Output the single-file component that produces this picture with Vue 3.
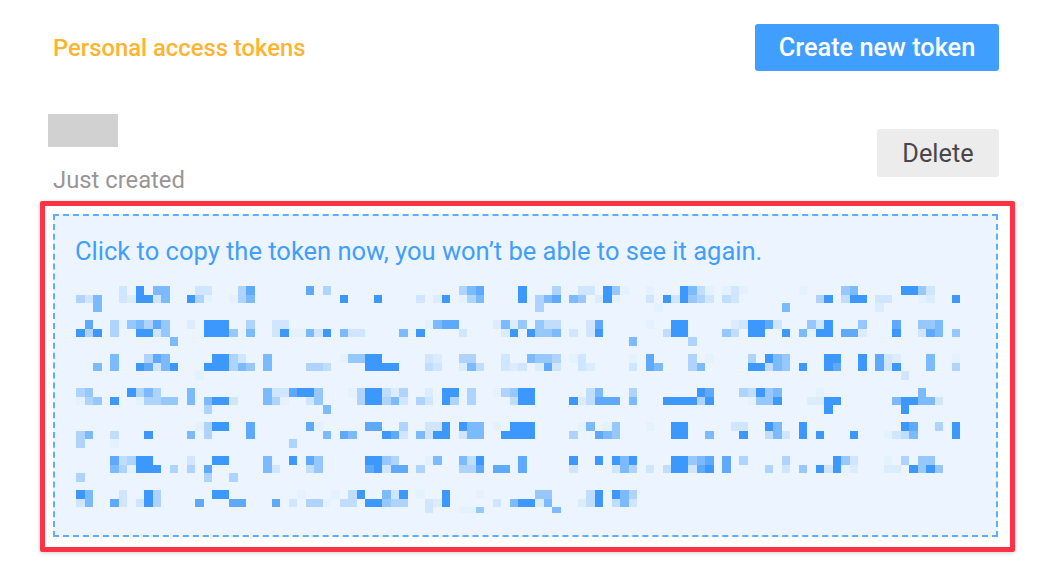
<script setup>
import { computed } from 'vue'

const CELL = 8.5

// blurred token: row index -> "column:level" pairs, level 1 (faint) to 5 (solid)
const tokenRows = {
  0: '5:2 7:5 9:4 10:4 14:2 15:2 19:3 20:4.5 27:4.5 29:3 45:3 46:4 47:4.5 52:5 56:3 59:2 60:2 62:5 63:3.5 64:1 67:1 71:5 72:4 73:2.5 74:1 76:1 77:2 78:1 85:1 90:3.5 91:4 97:5 98:5 99:3.5 100:2',
  1: '0:3 1:2 2:4 5:2 6:1.5 7:5 8:5 9:2 10:4 13:5 14:3 15:1 18:1 19:3 20:4 31:5 35:5 40:2 42:1.5 43:5 45:1 46:3 47:4 52:5 54:3 55:4 56:4.5 58:4 59:3.5 61:1.5 62:5 63:1 67:2 69:5 70:2 71:5 72:3.5 73:3 74:2 76:2.5 77:2 87:3 88:5 90:2.5 91:5 92:5 94:2 95:2 99:1 100:1.5 103:5',
  2: '2:4 54:3 68:1 83:4 94:1.5',
  4: '1:4.5 4:3 5:1 6:3.5 7:4 8:3 9:4.5 10:3.5 13:1.5 15:5 16:5 17:5 20:3 23:2 24:2 41:1 42:4 43:4.5 44:4.5 49:1.5 50:4 51:1.5 52:3.5 54:3.5 55:2.5 56:2.5 60:2 61:4.5 67:1 70:5 71:5 77:1.5 78:2 79:5 80:5 81:4.5 82:2 86:3.5 87:2 88:5 92:3.5 96:4.5 99:3.5 100:3.5 101:4',
  5: '0:5 1:3 2:5 4:3 7:5 8:5 9:2 10:3.5 15:5 16:5 17:5 18:3.5 20:4 23:2 24:5 25:1 26:1 27:4 28:2 29:5 31:4 32:2 33:2 38:4 40:5 45:2 50:1.5 51:5 53:5 54:3.5 55:3.5 56:4 58:2 60:2 61:5 69:2.5 70:5 71:5 76:3.5 77:2.5 79:5 80:5 83:5 85:4 86:1 87:5 88:5 90:4.5 91:4.5 92:1.5 96:5 99:2 100:4.5 101:4 103:3.5',
  6: '11:4 65:4 72:3',
  8: '4:4 8:3 9:4.5 10:4 16:5 17:5 18:3 19:2 22:4 31:1 32:3.5 33:3.5 34:5 35:5 41:2 42:1.5 45:3 46:3 50:2 53:4 54:3.5 55:3.5 56:3 58:1 59:2 65:1 67:4.5 72:3 74:1 79:3 81:5 82:4 83:3.5 88:5 89:5 92:5 94:4.5 95:2 96:1.5 100:4 103:1',
  9: '2:4 4:4 7:5 8:4.5 9:2 10:4 11:5 15:5 16:5 17:5 18:3 19:4 20:3.5 22:4 27:3 28:3 29:2.5 34:5 35:5 36:5 37:5 41:2.5 42:2 45:1.5 46:4 47:2.5 50:2 51:1.5 52:2 54:1.5 55:4.5 56:2 59:2 60:1.5 65:2 67:4.5 68:4 72:3 73:4 79:5 80:5 81:2.5 82:4 83:3.5 85:5 88:5 89:4.5 92:5 94:4.5 95:2 96:5 100:4 103:3',
  10: '14:1 97:2',
  12: '0:3 1:3.5 6:5 7:3 8:4 9:3 13:4 22:4 23:2 24:2 25:4.5 26:5 27:5 28:3.5 32:1 33:3 34:5 35:5 36:2.5 37:1.5 38:3 41:1.5 43:5 44:5 46:3 49:1 50:3 51:3.5 52:5 53:5 60:2.5 61:4 65:3 73:5 74:4.5 78:3 79:2.5 80:5 81:3.5 82:4 87:1 99:4',
  13: '0:1 1:3 2:3.5 4:5 7:1 8:3 9:3 10:3.5 11:3.5 13:4 15:4 16:5 17:5 18:2 22:4 23:3 24:1 27:2 28:3.5 33:3 34:5 35:5 36:3 37:4 38:2 40:3 41:2 43:5 44:3 46:3 51:2.5 52:5 53:5 58:5 59:1.5 60:2.5 61:4.5 62:4.5 63:4.5 65:4 69:5 70:5 71:5 72:5 73:3 74:5 79:1 80:3.5 81:3.5 82:5 86:1.5 87:1.5 88:5 89:5 96:4 97:5 98:5 99:4 100:4 101:2',
  14: '15:3 29:4 88:5 97:5',
  16: '14:1 15:3 16:5 17:5 20:4.5 27:4.5 28:1 34:4.5 35:4.5 38:3 41:2 42:2 43:5 45:5 46:4 47:4 49:1 51:5 52:5 53:5 59:1 60:4 62:1 63:3.5 67:1 70:5 71:5 77:2 78:2 81:5 82:4 85:5 97:5 98:4.5 101:3 103:5',
  17: '0:3 1:4 4:2.5 8:5 13:4 15:3 20:4.5 29:4 31:4.5 32:4 36:5 37:4.5 38:2 40:4 41:2 42:5 43:5 45:2 46:4 47:4 50:5 51:5 52:5 53:5 58:3 61:4.5 62:4 63:3.5 70:5 71:5 74:4 78:5 81:2.5 82:4 83:2 85:5 87:5 91:5 95:1 96:2 97:2.5 98:4 103:5',
  18: '0:3 4:1 25:3',
  20: '4:4.5 5:2.5 6:3 7:5 8:5 13:2 16:5 17:5 22:4 25:5 27:4.5 28:3.5 34:5 35:5 36:3.5 37:3 41:1 42:4 45:4 46:2.5 47:5 52:4.5 58:5 61:5 63:5 64:4 65:5 70:5 71:5 72:3.5 73:4 74:4.5 76:4.5 78:3 83:3 89:5 90:3.5 91:2 95:1 97:3 99:3.5 100:3.5',
  21: '4:4 5:3 6:1 7:5 8:5 9:5 11:3 13:3 15:4.5 22:4 23:2 27:2.5 28:3.5 34:4.5 35:5 36:2 37:4.5 38:4.5 40:3 45:3 46:3 47:4.5 49:4.5 50:4.5 52:4.5 58:2 63:2 64:4 65:3 67:2 69:2.5 70:5 71:5 72:2 73:4.5 74:5 76:4.5 81:3 83:2 85:3.5 87:5 88:2 89:5 90:1 91:1.5 95:1.5 96:1.5 98:5 99:3.5 100:5 101:3.5',
  22: '0:3 15:3 18:3',
  24: '0:5 1:4 5:2 8:5 9:3 16:5 17:5 26:1 30:1 32:2.5 33:5 36:4 37:2 38:5 40:1 43:5 47:1 54:3.5 55:3.5 60:2.5 61:5 63:5 64:4 65:3',
  25: '0:2 1:4 4:4.5 5:2 7:2 8:5 9:3 14:4.5 18:4.5 19:4.5 23:4.5 25:2 27:3 28:3 29:1 31:2.5 32:2.5 34:5 35:5 36:3.5 37:3 38:3 41:2 42:1.5 43:5 49:2 51:4 52:5 53:5 54:1.5 55:4 59:1.5 60:2.5 61:5 63:2.5 64:4 65:2'
}

// last row is cut off by the blur, only the top part of the cell shows
const clippedCells = [
  { key: 'c-41', col: 41, level: 2 },
  { key: 'c-45', col: 45, level: 1 },
  { key: 'c-46', col: 46, level: 1 },
  { key: 'c-47', col: 47, level: 3.5 },
  { key: 'c-56', col: 56, level: 4 }
]

const cells = computed(() => {
  const out = []
  for (const [row, pairs] of Object.entries(tokenRows)) {
    for (const pair of pairs.split(' ')) {
      const [col, level] = pair.split(':').map(Number)
      out.push({
        key: `${row}-${col}`,
        x: col * CELL,
        y: row * CELL,
        h: CELL,
        opacity: (level / 5) ** 2
      })
    }
  }
  for (const c of clippedCells) {
    out.push({
      key: c.key,
      x: c.col * CELL,
      y: 26 * CELL,
      h: 6,
      opacity: (c.level / 5) ** 2
    })
  }
  return out
})
</script>

<template>
  <div class="page">
    <header class="head">
      <h2 class="title">Personal access tokens</h2>
      <button class="btn primary">Create new token</button>
    </header>

    <div class="token-row">
      <div class="token-info">
        <div class="name-redacted"></div>
        <p class="created">Just created</p>
      </div>
      <button class="btn plain">Delete</button>
    </div>

    <div class="highlight">
      <div class="token-box">
        <p class="hint">Click to copy the token now, you won’t be able to see it again.</p>
        <svg class="token" width="892" height="230" viewBox="0 0 892 230" shape-rendering="crispEdges" aria-hidden="true">
          <rect
            v-for="c in cells"
            :key="c.key"
            :x="c.x"
            :y="c.y"
            :width="CELL"
            :height="c.h"
            :fill-opacity="c.opacity"
            fill="#3d98fd"
          />
        </svg>
      </div>
    </div>
  </div>
</template>

<style scoped>
.page {
  width: 1060px;
  height: 561px;
  box-sizing: border-box;
  padding: 24px 61px 0 48px;
  font-family: Roboto, "Liberation Sans", sans-serif;
  overflow: hidden;
  background: #fff;
}

.head {
  display: flex;
  justify-content: space-between;
  align-items: center;
  height: 47px;
  padding-left: 5px;
}

.title {
  margin: 0;
  font-size: 23.8px;
  font-weight: 500;
  color: #ffb32e;
}

.btn {
  border: none;
  border-radius: 3px;
  font-family: inherit;
  font-size: 25.3px;
  cursor: pointer;
}

.primary {
  width: 244px;
  height: 47px;
  background: #409eff;
  color: #fff;
  font-weight: 500;
}

.plain {
  width: 122px;
  height: 48px;
  margin-top: 15px;
  background: #ececec;
  color: #4a4548;
}

.token-row {
  display: flex;
  justify-content: space-between;
  margin-top: 43px;
  height: 87px;
}

.name-redacted {
  width: 70px;
  height: 33px;
  background: #d1d1d1;
}

.created {
  margin: 17px 0 0 5px;
  font-size: 23.8px;
  line-height: 32px;
  color: #999597;
}

.highlight {
  margin: 0 -16px 0 -8px;
  padding: 8px 12px 10px 8px;
  border: 5px solid #ff3344;
  border-radius: 2px;
  box-shadow: 0 1px 4px rgba(0, 0, 0, 0.18);
  background: #fff;
}

.token-box {
  box-sizing: border-box;
  height: 323px;
  padding: 19px 0 0 21px;
  border: 2px dashed #5fadff;
  background: #ecf5ff;
}

.hint {
  margin: 0 0 0 -1px;
  font-size: 25.5px;
  line-height: 32px;
  color: #409eff;
}

.token {
  display: block;
  margin-top: 19px;
}
</style>

<style>
html,
body {
  margin: 0;
  background: #fff;
}
</style>
